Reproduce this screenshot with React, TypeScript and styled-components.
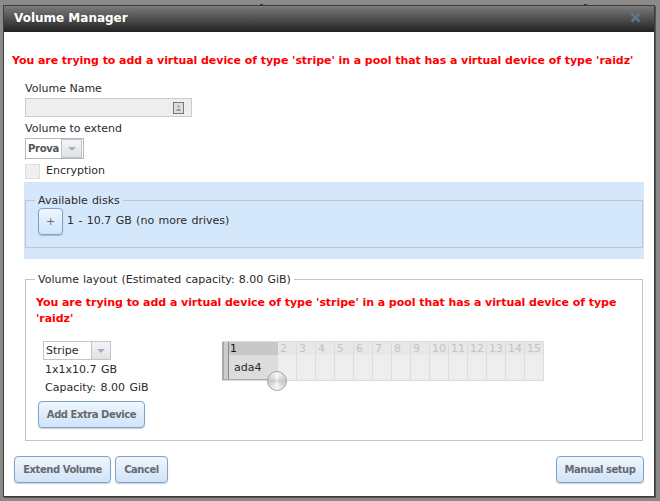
import styled, { createGlobalStyle } from "styled-components";

const GlobalStyle = createGlobalStyle`
  html, body {
    margin: 0;
    padding: 0;
    background: #8a8a8a;
  }
  body {
    font-family: "DejaVu Sans", Verdana, sans-serif;
    font-size: 11px;
    color: #2a2a2a;
  }
`;

const Page = styled.div`
  position: relative;
  width: 660px;
  height: 501px;
  padding: 5px 5px 4px 3px;
  box-sizing: border-box;
  overflow: hidden;
  background: #8a8a8a;
`;

const BackdropMark = styled.span<{ $left: number }>`
  position: absolute;
  top: 4px;
  left: ${(p) => p.$left}px;
  width: 3px;
  height: 1px;
  background: #333;
`;

const Dialog = styled.div`
  height: 100%;
  box-sizing: border-box;
  border: 1px solid #3c3c3c;
  box-shadow: 1px 1px 0 #555;
  background: #fff;
  display: flex;
  flex-direction: column;
`;

const TitleBar = styled.div`
  height: 26px;
  flex: none;
  display: flex;
  align-items: center;
  justify-content: space-between;
  padding: 0 13px 3px 10px;
  box-sizing: border-box;
  background: linear-gradient(#7b7b7b, #222);
  color: #fff;
  font-size: 12px;
  font-weight: bold;
`;

const Body = styled.div`
  flex: 1;
  display: flex;
  flex-direction: column;
  padding: 21px 10px 0 8px;
`;

const ErrorText = styled.div`
  color: #f00;
  font-weight: bold;
  line-height: 16px;
  letter-spacing: -0.056px;
`;

const Form = styled.div`
  display: flex;
  flex-direction: column;
  padding: 11px 0 0 13px;
`;

const Label = styled.div`
  height: 16px;
  line-height: 18px;
  margin-bottom: 2px;
`;

const TextBox = styled.div`
  width: 167px;
  height: 19px;
  margin-bottom: 3px;
  border: 1px solid #ccc;
  background: #eee;
  display: flex;
  align-items: center;
  justify-content: flex-end;
  padding-right: 7px;
  box-sizing: border-box;
`;

const SelectBox = styled.div<{ $height: number; $border: string }>`
  display: flex;
  align-self: flex-start;
  width: fit-content;
  align-items: center;
  box-sizing: border-box;
  border: 1px solid ${(p) => p.$border};
  background: #fff;
  height: ${(p) => p.$height}px;
`;

const SelectText = styled.span<{ $width: number; $bold?: boolean }>`
  width: ${(p) => p.$width}px;
  padding-left: 2px;
  box-sizing: border-box;
  line-height: 18px;
  font-size: ${(p) => (p.$bold ? "10px" : "11px")};
  font-weight: ${(p) => (p.$bold ? "bold" : "normal")};
  color: ${(p) => (p.$bold ? "#555" : "#2a2a2a")};
  letter-spacing: ${(p) => (p.$bold ? "-0.3px" : "0")};
`;

const SelectArrow = styled.span<{ $boxed?: boolean }>`
  box-sizing: border-box;
  width: ${(p) => (p.$boxed ? "21px" : "19px")};
  height: ${(p) => (p.$boxed ? "19px" : "17px")};
  border: 1px solid #c0c4cc;
  border-width: ${(p) => (p.$boxed ? "1px" : "0 0 0 1px")};
  margin-right: ${(p) => (p.$boxed ? "1px" : "0")};
  background: linear-gradient(#f4f4f4, #e2e2e2);
  display: flex;
  align-items: center;
  justify-content: center;

  &::after {
    content: "";
    border: 4px solid transparent;
    border-top: 4px solid #9fb0cc;
    border-bottom: 0;
  }
`;

const CheckRow = styled.div`
  display: flex;
  align-items: flex-start;
  gap: 6px;
  margin-top: 5px;
  height: 15px;
  line-height: 13px;
`;

const CheckBox = styled.span`
  width: 15px;
  height: 15px;
  box-sizing: border-box;
  border: 1px solid #ddd;
  background: #f0f0f0;
`;

const DisksBand = styled.div`
  background: #d5e8fb;
  margin: 3px 0 0 12px;
  padding: 10px 1px 11px 1px;
`;

const Group = styled.fieldset`
  margin: 0;
  border: 1px solid #c4c4c4;
  padding: 0 12px;
  min-width: 0;
  display: block;
`;

const GroupTitle = styled.legend<{ $offset: number }>`
  padding: 2px 3px 0;
  margin-left: ${(p) => p.$offset}px;
  line-height: 14px;
  word-spacing: 0.6px;
`;

const DiskRow = styled.div`
  display: flex;
  align-items: flex-start;
  gap: 4px;
  height: 27px;
  padding-bottom: 12px;
  line-height: 26px;
  word-spacing: 0.9px;
`;

const Button = styled.button<{ $width: number }>`
  width: ${(p) => p.$width}px;
  height: 27px;
  padding: 0;
  border: 1px solid #7ba3cc;
  border-radius: 4px;
  background: linear-gradient(#f0f5fb, #d0e4f9);
  box-shadow: 0 1px 1px rgba(0, 0, 0, 0.2);
  font-family: inherit;
  font-size: 10px;
  font-weight: bold;
  letter-spacing: -0.45px;
  color: #666a70;
`;

const PlusButton = styled(Button)`
  font-weight: normal;
  font-size: 11px;
  letter-spacing: 0;
  line-height: 21px;
`;

const LayoutGroup = styled(Group)`
  margin: 12px 1px 0 13px;
  padding: 0 12px 12px 10px;
`;

const LayoutError = styled(ErrorText)`
  margin-top: 8px;
`;

const LayoutBody = styled.div`
  display: flex;
  margin-top: 14px;
`;

const LayoutSide = styled.div`
  width: 186px;
  flex: none;
`;

const SideSelect = styled(SelectBox)`
  margin-left: 7px;
`;

const InfoLine = styled.div`
  line-height: 18px;
  padding: 1px 0 0 9px;
  margin-bottom: -1px;
  word-spacing: 1px;
`;

const ExtraButton = styled(Button)`
  margin: 5px 0 0 2px;
  display: block;
`;

const Grid = styled.div`
  position: relative;
  display: flex;
  width: 322px;
  height: 40px;
  box-sizing: border-box;
  border: 1px solid #dcdcdc;
  border-left: 0;
  background: #eee;
`;

const GridColumn = styled.div`
  width: 19px;
  flex: none;
  box-sizing: border-box;
  border-right: 1px solid #dcdcdc;
  background: linear-gradient(#e8e8e8 13px, #eee 13px);
  line-height: 14px;
  padding-left: 2px;
  color: #c4c4c4;
`;

const FirstColumn = styled.div`
  width: 56px;
  flex: none;
  box-sizing: border-box;
  border-left: 2px solid #aaa;
  border-bottom: 1px solid #aaa;
  padding-left: 4px;
  background: #cdcdcd;
`;

const FirstInner = styled.div`
  height: 100%;
  border-left: 1px solid #888;
  background: #dcdcdc;
`;

const FirstHead = styled.div`
  height: 13px;
  background: #c8c8c8;
  line-height: 13px;
  padding-left: 1px;
  color: #111;
`;

const FirstDisk = styled.div`
  padding: 6px 0 0 5px;
  color: #2a2a2a;
`;

const Handle = styled.span`
  position: absolute;
  left: 45px;
  bottom: -11px;
  width: 18px;
  height: 18px;
  border: 1px solid #a5a5a5;
  border-radius: 50%;
  background: conic-gradient(#f6f6f6, #c8c8c8, #f6f6f6, #c8c8c8, #f6f6f6);
`;

const Footer = styled.div`
  display: flex;
  gap: 4px;
  margin: 15px 0 0 2px;
`;

const FooterRight = styled.div`
  margin-left: auto;
`;

const columns = ["2", "3", "4", "5", "6", "7", "8", "9", "10", "11", "12", "13", "14", "15"];
const warning =
  "You are trying to add a virtual device of type 'stripe' in a pool that has a virtual device of type 'raidz'";

const App = () => {
  return (
    <>
      <GlobalStyle />
      <Page>
        <BackdropMark $left={260} />
        <BackdropMark $left={584} />
        <Dialog>
          <TitleBar>
            <span>Volume Manager</span>
            <svg width="11" height="11" viewBox="0 0 11 11">
              <path d="M1.5 1.5l8 8M9.5 1.5l-8 8" stroke="#5f7485" strokeWidth="2.6" />
            </svg>
          </TitleBar>
          <Body>
            <ErrorText>{warning}</ErrorText>
            <Form>
              <Label>Volume Name</Label>
              <TextBox>
                <svg width="11" height="12" viewBox="0 0 11 12">
                  <rect x="0.5" y="0.5" width="10" height="11" fill="#ddd" stroke="#777" />
                  <path d="M5.5 2.5l1.5 3h-3zM3.5 7h4v2h-4z" fill="#999" />
                </svg>
              </TextBox>
              <Label>Volume to extend</Label>
              <SelectBox $height={21} $border="#b3b9c4">
                <SelectText $width={35} $bold>
                  Prova
                </SelectText>
                <SelectArrow $boxed />
              </SelectBox>
              <CheckRow>
                <CheckBox />
                Encryption
              </CheckRow>
            </Form>
            <DisksBand>
              <Group>
                <GroupTitle $offset={-3}>Available disks</GroupTitle>
                <DiskRow>
                  <PlusButton $width={25}>+</PlusButton>
                  1 - 10.7 GB (no more drives)
                </DiskRow>
              </Group>
            </DisksBand>
            <LayoutGroup>
              <GroupTitle $offset={-1}>Volume layout (Estimated capacity: 8.00 GiB)</GroupTitle>
              <LayoutError>{warning}</LayoutError>
              <LayoutBody>
                <LayoutSide>
                  <SideSelect $height={19} $border="#c0c4cc">
                    <SelectText $width={47}>Stripe</SelectText>
                    <SelectArrow />
                  </SideSelect>
                  <InfoLine>1x1x10.7 GB</InfoLine>
                  <InfoLine>Capacity: 8.00 GiB</InfoLine>
                  <ExtraButton $width={107}>Add Extra Device</ExtraButton>
                </LayoutSide>
                <Grid>
                  <FirstColumn>
                    <FirstInner>
                      <FirstHead>1</FirstHead>
                      <FirstDisk>ada4</FirstDisk>
                    </FirstInner>
                  </FirstColumn>
                  {columns.map((c) => (
                    <GridColumn key={c}>{c}</GridColumn>
                  ))}
                  <Handle />
                </Grid>
              </LayoutBody>
            </LayoutGroup>
            <Footer>
              <Button $width={97}>Extend Volume</Button>
              <Button $width={53}>Cancel</Button>
              <FooterRight>
                <Button $width={88}>Manual setup</Button>
              </FooterRight>
            </Footer>
          </Body>
        </Dialog>
      </Page>
    </>
  );
};

export default App;
